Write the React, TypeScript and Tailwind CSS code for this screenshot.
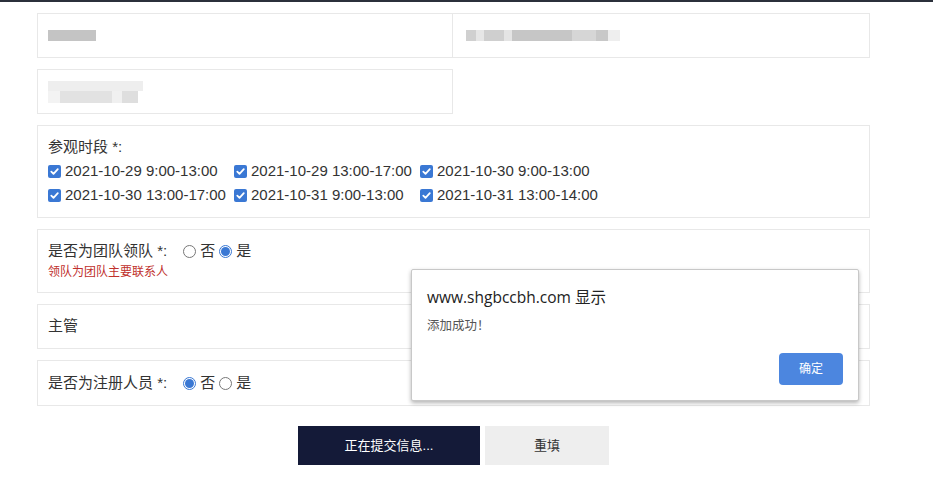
import React from "react";

const font = { fontFamily: '"Liberation Sans", "Noto Sans CJK SC", sans-serif' };
const dlgFont = { fontFamily: '"Open Sans", "Noto Sans CJK SC", sans-serif' };

function Check() {
  return (
    <span className="inline-flex h-[13px] w-[13px] shrink-0 items-center justify-center rounded-[2px] bg-[#3a78d4]">
      <svg width="11" height="11" viewBox="0 0 11 11" fill="none">
        <path d="M2.3 5.6 L4.5 7.8 L8.8 3.2" stroke="white" strokeWidth="1.8" strokeLinecap="round" strokeLinejoin="round" />
      </svg>
    </span>
  );
}

function Radio({ checked }: { checked?: boolean }) {
  return checked ? (
    <span className="inline-flex h-[13px] w-[13px] shrink-0 items-center justify-center rounded-full border border-[#3a78d4] bg-white">
      <span className="h-[9px] w-[9px] rounded-full bg-[#3a78d4]" />
    </span>
  ) : (
    <span className="inline-block h-[13px] w-[13px] shrink-0 rounded-full border border-[#777] bg-white" />
  );
}

const slots = [
  "2021-10-29 9:00-13:00",
  "2021-10-29 13:00-17:00",
  "2021-10-30 9:00-13:00",
  "2021-10-30 13:00-17:00",
  "2021-10-31 9:00-13:00",
  "2021-10-31 13:00-14:00",
];

export default function App() {
  return (
    <div className="relative h-[502px] w-[933px] overflow-hidden bg-white text-[#333]" style={font}>
      <div className="h-[2px] w-full bg-[#2b303b]" />
      <div className="ml-[37px] mt-[11px] flex w-[833px] flex-col gap-[11px]">
        <div className="flex">
          <div className="flex h-[45px] w-[416px] items-center border border-[#e8e8e8] pl-[10px]">
            <div className="h-[11px] w-[48px] bg-[#c4c4c4]" />
          </div>
          <div className="flex h-[45px] w-[417px] items-center border border-l-0 border-[#e8e8e8] pl-[13px]">
            <div className="flex h-[11px] items-center">
              <div className="h-[11px] w-[10px] bg-[#d0d0d0]" />
              <div className="h-[11px] w-[8px] bg-[#e6e6e6]" />
              <div className="h-[11px] w-[20px] bg-[#cfcfcf]" />
              <div className="h-[11px] w-[8px] bg-[#e4e4e4]" />
              <div className="h-[11px] w-[60px] bg-[#c6c6c6]" />
              <div className="h-[11px] w-[24px] bg-[#d6d6d6]" />
              <div className="h-[11px] w-[12px] bg-[#c8c8c8]" />
              <div className="h-[11px] w-[12px] bg-[#eeeeee]" />
            </div>
          </div>
        </div>
        <div className="flex h-[45px] w-[416px] flex-col justify-center border border-[#e8e8e8] pl-[10px]">
          <div className="h-[10px] w-[95px] bg-[#eeeeee]" />
          <div className="flex">
            <div className="h-[12px] w-[12px] bg-[#f3f3f3]" />
            <div className="h-[12px] w-[52px] bg-[#e2e2e2]" />
            <div className="h-[12px] w-[10px] bg-[#f0f0f0]" />
            <div className="h-[12px] w-[16px] bg-[#dedede]" />
          </div>
        </div>
        <div className="border border-[#e8e8e8] pb-[10px] pl-[10px] pt-[9px] text-[15px] leading-[24px]">
          <div>参观时段 *:</div>
          <div className="grid grid-cols-[186px_186px_186px]">
            {slots.map((s) => (
              <div key={s} className="flex items-center gap-[4px] whitespace-nowrap">
                <Check />
                <span>{s}</span>
              </div>
            ))}
          </div>
        </div>
        <div className="border border-[#e8e8e8] pb-[11px] pl-[10px] pt-[9px]">
          <div className="flex items-center text-[15px] leading-[24px]">
            <span>是否为团队领队 *:</span>
            <span className="ml-[16px] flex items-center gap-[4px]">
              <Radio />
              <span>否</span>
            </span>
            <span className="ml-[4px] flex items-center gap-[4px]">
              <Radio checked />
              <span>是</span>
            </span>
          </div>
          <div className="text-[12px] leading-[18px] text-[#c0302c]">领队为团队主要联系人</div>
        </div>
        <div className="flex h-[45px] items-center border border-[#e8e8e8] pl-[10px] text-[15px]">主管</div>
        <div className="flex h-[46px] items-center border border-[#e8e8e8] pl-[10px] text-[15px]">
          <span>是否为注册人员 *:</span>
          <span className="ml-[16px] flex items-center gap-[4px]">
            <Radio checked />
            <span>否</span>
          </span>
          <span className="ml-[4px] flex items-center gap-[4px]">
            <Radio />
            <span>是</span>
          </span>
        </div>
        <div className="mt-[9px] flex justify-center gap-[5px]">
          <button className="h-[39px] w-[182px] bg-[#141a38] text-[13px] text-white">正在提交信息...</button>
          <button className="h-[39px] w-[124px] bg-[#eeeeee] text-[13px] text-[#333]">重填</button>
        </div>
      </div>

      <div className="absolute left-[411px] top-[269px] h-[132px] w-[448px] rounded-[2px] border border-[#c8c8c8] bg-white shadow-[0_2px_4px_rgba(0,0,0,0.3)]">
        <div className="pl-[15px] pt-[16px] text-[15.5px] leading-[22px] text-[#222]" style={dlgFont}>www.shgbccbh.com 显示</div>
        <div className="pl-[15px] pt-[9px] text-[12.5px] leading-[18px] text-[#555]">添加成功！</div>
        <button className="absolute left-[367px] top-[83px] h-[32px] w-[64px] rounded-[4px] bg-[#4c86df] text-[12px] text-white">确定</button>
      </div>
    </div>
  );
}
